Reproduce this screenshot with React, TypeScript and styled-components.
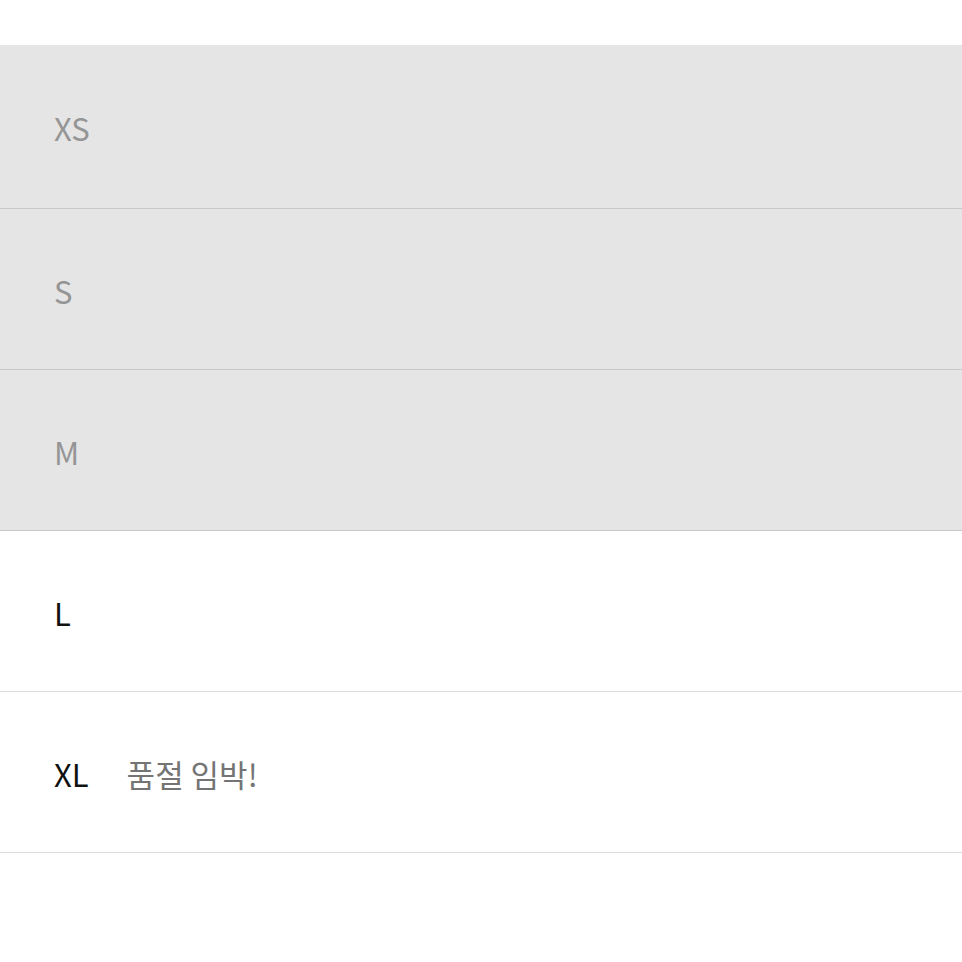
import React from "react";
import styled, { createGlobalStyle } from "styled-components";

const GlobalStyle = createGlobalStyle`
  body {
    margin: 0;
    background: #ffffff;
    font-family: "Noto Sans CJK KR", "Noto Sans", sans-serif;
  }
`;

const StyledSizeList = styled.div`
  display: flex;
  flex-direction: column;
  padding-top: 46px;
`;

const SizeRow = styled.div<{ $soldOut: boolean }>`
  display: flex;
  align-items: center;
  gap: 38px;
  height: 158px;
  padding: 2px 54px 0;
  border-bottom: 1px solid ${(p) => (p.$soldOut ? "#c8c8c8" : "#dcdcdc")};
  background-color: ${(p) => (p.$soldOut ? "#e5e5e5" : "#ffffff")};

  &:first-child {
    height: 161px;
    margin-top: -1px;
  }
`;

const SizeLabel = styled.span<{ $soldOut: boolean }>`
  font-size: 31px;
  color: ${(p) => (p.$soldOut ? "#959595" : "#111111")};
`;

const StockNote = styled.span`
  font-size: 31px;
  color: #747474;
`;

const sizes = [
  { label: "XS", soldOut: true },
  { label: "S", soldOut: true },
  { label: "M", soldOut: true },
  { label: "L", soldOut: false },
  { label: "XL", soldOut: false, note: "품절 임박!" },
];

export default function App(): JSX.Element {
  return (
    <>
      <GlobalStyle />
      <StyledSizeList>
        {sizes.map((s) => (
          <SizeRow key={s.label} $soldOut={s.soldOut}>
            <SizeLabel $soldOut={s.soldOut}>{s.label}</SizeLabel>
            {s.note && <StockNote>{s.note}</StockNote>}
          </SizeRow>
        ))}
      </StyledSizeList>
    </>
  );
}
